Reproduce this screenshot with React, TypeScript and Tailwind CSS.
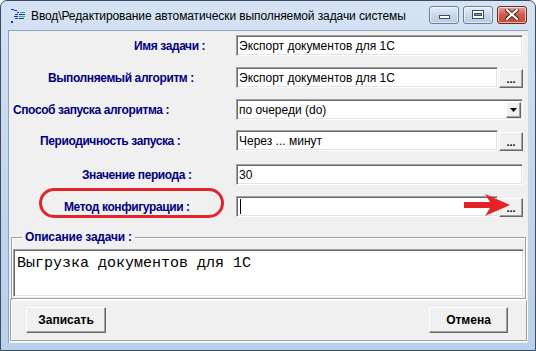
import React from "react";

const sunken =
  "bg-white border border-t-[#a0a0a0] border-l-[#a0a0a0] border-b-white border-r-white shadow-[inset_1px_1px_0_#696969,inset_-1px_-1px_0_#e3e3e3]";

const raised =
  "bg-[#f0f0f0] border border-t-white border-l-white border-b-[#696969] border-r-[#696969] shadow-[inset_-1px_-1px_0_#a0a0a0]";

function Label({ text, pl }: { text: string; pl: string }) {
  return (
    <div className={`w-[227px] flex ${pl}`}>
      <span className="text-[12px] tracking-[-0.4px] font-bold text-[#000080] leading-none whitespace-nowrap">{text}</span>
    </div>
  );
}

function Field({ value, mt, button, caret }: { value: string; mt: string; button?: boolean; caret?: boolean }) {
  return (
    <div className={`flex items-end ${mt}`}>
      <div className={`${sunken} h-[21px] ${button ? "w-[262px]" : "w-[287px]"} flex items-center px-[2px] text-[12px] text-black`}>
        {caret ? <span className="w-[1px] h-[15px] bg-black ml-[1px]" /> : value}
      </div>
      {button && (
        <div className={`${raised} w-[24px] h-[19px] ml-[1px] flex items-end justify-center pb-[2px] text-[11px] font-bold leading-none`}>
          ...
        </div>
      )}
    </div>
  );
}

function TitleButton({ kind }: { kind: "min" | "max" | "close" }) {
  const base =
    kind === "close"
      ? "bg-gradient-to-b from-[#e8a49a] via-[#cf5848] to-[#c84a38] border-[#6b2a22]"
      : "bg-gradient-to-b from-[#e6eef8] via-[#c8d8ec] to-[#b8cbe3] border-[#6b7f99]";
  return (
    <div className={`${base} w-[30px] h-[18px] border rounded-[3px] flex items-center justify-center shadow-[inset_0_0_0_1px_rgba(255,255,255,0.6)]`}>
      {kind === "min" && <div className="w-[11px] h-[4px] bg-white border border-[#3b4a60] mt-[5px]" />}
      {kind === "max" && (
        <div className="w-[12px] h-[9px] border border-[#3b4a60] bg-white flex items-center justify-center">
          <div className="w-[8px] h-[3px] bg-[#8aa0bd] border border-[#3b4a60]" />
        </div>
      )}
      {kind === "close" && (
        <svg width="14" height="11" viewBox="0 0 14 11">
          <path d="M2 1 L12 10 M12 1 L2 10" stroke="#3a1a15" strokeWidth="4" strokeLinecap="square" />
          <path d="M2 1 L12 10 M12 1 L2 10" stroke="#ffffff" strokeWidth="2.2" strokeLinecap="square" />
        </svg>
      )}
    </div>
  );
}

export default function App() {
  return (
    <div className="w-[536px] h-[351px] bg-white" style={{ fontFamily: '"Liberation Sans", Arial, sans-serif' }}>
      <div className="w-[536px] h-[351px] rounded-t-[7px] border border-[#3c4b5e] bg-gradient-to-b from-[#d4e3f4] via-[#c3d7ee] to-[#b9d1ea] flex flex-col">
        {/* title bar */}
        <div className="h-[29px] flex items-center pl-[9px] pr-[8px]">
          <svg width="16" height="16" viewBox="0 0 16 16" className="mt-[1px] shrink-0">
            <rect x="1" y="1" width="3" height="1" fill="#1a2cd0" />
            <rect x="4" y="2" width="3" height="1" fill="#1a2cd0" />
            <rect x="7" y="4" width="2" height="1" fill="#1a2cd0" />
            <rect x="10" y="4" width="5" height="1" fill="#22c022" />
            <rect x="5" y="6" width="3" height="1" fill="#1a2cd0" />
            <rect x="9" y="6" width="6" height="1" fill="#1a2cd0" />
            <rect x="4" y="8" width="4" height="1" fill="#1a2cd0" />
            <rect x="9" y="8" width="6" height="1" fill="#22c022" />
            <rect x="5" y="10" width="3" height="1" fill="#1a2cd0" />
            <rect x="9" y="10" width="5" height="1" fill="#1a2cd0" />
            <rect x="1" y="13" width="2" height="2" fill="#1a2cd0" />
          </svg>
          <span className="ml-[5px] text-[12px] tracking-[-0.1px] text-black whitespace-nowrap">
            Ввод\Редактирование автоматически выполняемой задачи системы
          </span>
          <div className="ml-auto flex gap-[4px] mt-[-2px] shrink-0">
            <TitleButton kind="min" />
            <TitleButton kind="max" />
            <TitleButton kind="close" />
          </div>
        </div>

        {/* client */}
        <div className="mx-[7px] h-[313px] bg-[#f0f0f0] border-l border-t border-[#8ea3bd] relative">
          <div className="flex">
            <div className="flex flex-col">
              <div className="h-[21px] mt-[4px] flex items-center"><Label text="Имя задачи :" pl="pl-[125px]" /></div>
              <div className="h-[21px] mt-[11px] flex items-center"><Label text="Выполняемый алгоритм :" pl="pl-[39px]" /></div>
              <div className="h-[21px] mt-[11px] flex items-center"><Label text="Способ запуска алгоритма :" pl="pl-[4px]" /></div>
              <div className="h-[21px] mt-[10px] flex items-center"><Label text="Периодичность запуска :" pl="pl-[31px]" /></div>
              <div className="h-[21px] mt-[13px] flex items-center"><Label text="Значение периода :" pl="pl-[73px]" /></div>
              <div className="h-[21px] mt-[11px] flex items-center"><Label text="Метод конфигурации :" pl="pl-[55px]" /></div>
            </div>
            <div className="flex flex-col">
              <Field value="Экспорт документов для 1С" mt="mt-[4px]" />
              <Field value="Экспорт документов для 1С" mt="mt-[11px]" button />
              <div className={`${sunken} mt-[11px] h-[21px] w-[287px] flex items-center pl-[2px] text-[12px] text-black`}>
                <span>по очереди (do)</span>
                <div className={`${raised} ml-auto mr-[1px] w-[15px] h-[16px] flex items-center justify-center`}>
                  <svg width="7" height="4" viewBox="0 0 7 4"><path d="M0 0 H7 L3.5 4 Z" fill="#000" /></svg>
                </div>
              </div>
              <Field value="Через ... минут" mt="mt-[10px]" button />
              <Field value="30" mt="mt-[13px]" />
              <Field value="" mt="mt-[11px]" button caret />
            </div>
          </div>

          {/* annotations */}
          <div className="absolute left-[30px] top-[157px] w-[185px] h-[30px] rounded-full border-[3px] border-[#e0252b]" />
          <svg className="absolute left-[455px] top-[162px]" width="46" height="24" viewBox="0 0 46 24">
            <path d="M0 9 H26 L21 1 L46 12 L21 23 L26 15 H0 Z" fill="#e42228" />
          </svg>

          {/* description group */}
          <div className="mt-[20px] mx-[2px] w-[515px] border border-[#a0a0a0] shadow-[inset_1px_1px_0_#fff,1px_1px_0_#fff] relative pt-[11px] px-[1px] pb-[1px]">
            <span className="absolute left-[10px] top-[-8px] px-[3px] bg-[#f0f0f0] text-[12px] tracking-[-0.2px] font-bold text-[#000080] leading-[14px]">
              Описание задачи :
            </span>
            <div className={`${sunken} h-[48px] pl-[3px] pt-[5px] text-[15px] leading-[17px] text-black`} style={{ fontFamily: '"Liberation Mono", "Courier New", monospace' }}>
              Выгрузка документов для 1С
            </div>
          </div>

          {/* bottom panel */}
          <div className="mx-[1px] w-[517px] h-[42px] border border-[#a0a0a0] shadow-[inset_1px_1px_0_#fff,1px_1px_0_#fff] flex items-center justify-between px-[15px]">
            <div className={`${raised} w-[80px] h-[26px] flex items-center justify-center text-[12px] font-bold text-black`}>Записать</div>
            <div className={`${raised} w-[79px] h-[26px] flex items-center justify-center text-[12px] font-bold text-black mr-[3px]`}>Отмена</div>
          </div>
        </div>
      </div>
    </div>
  );
}
